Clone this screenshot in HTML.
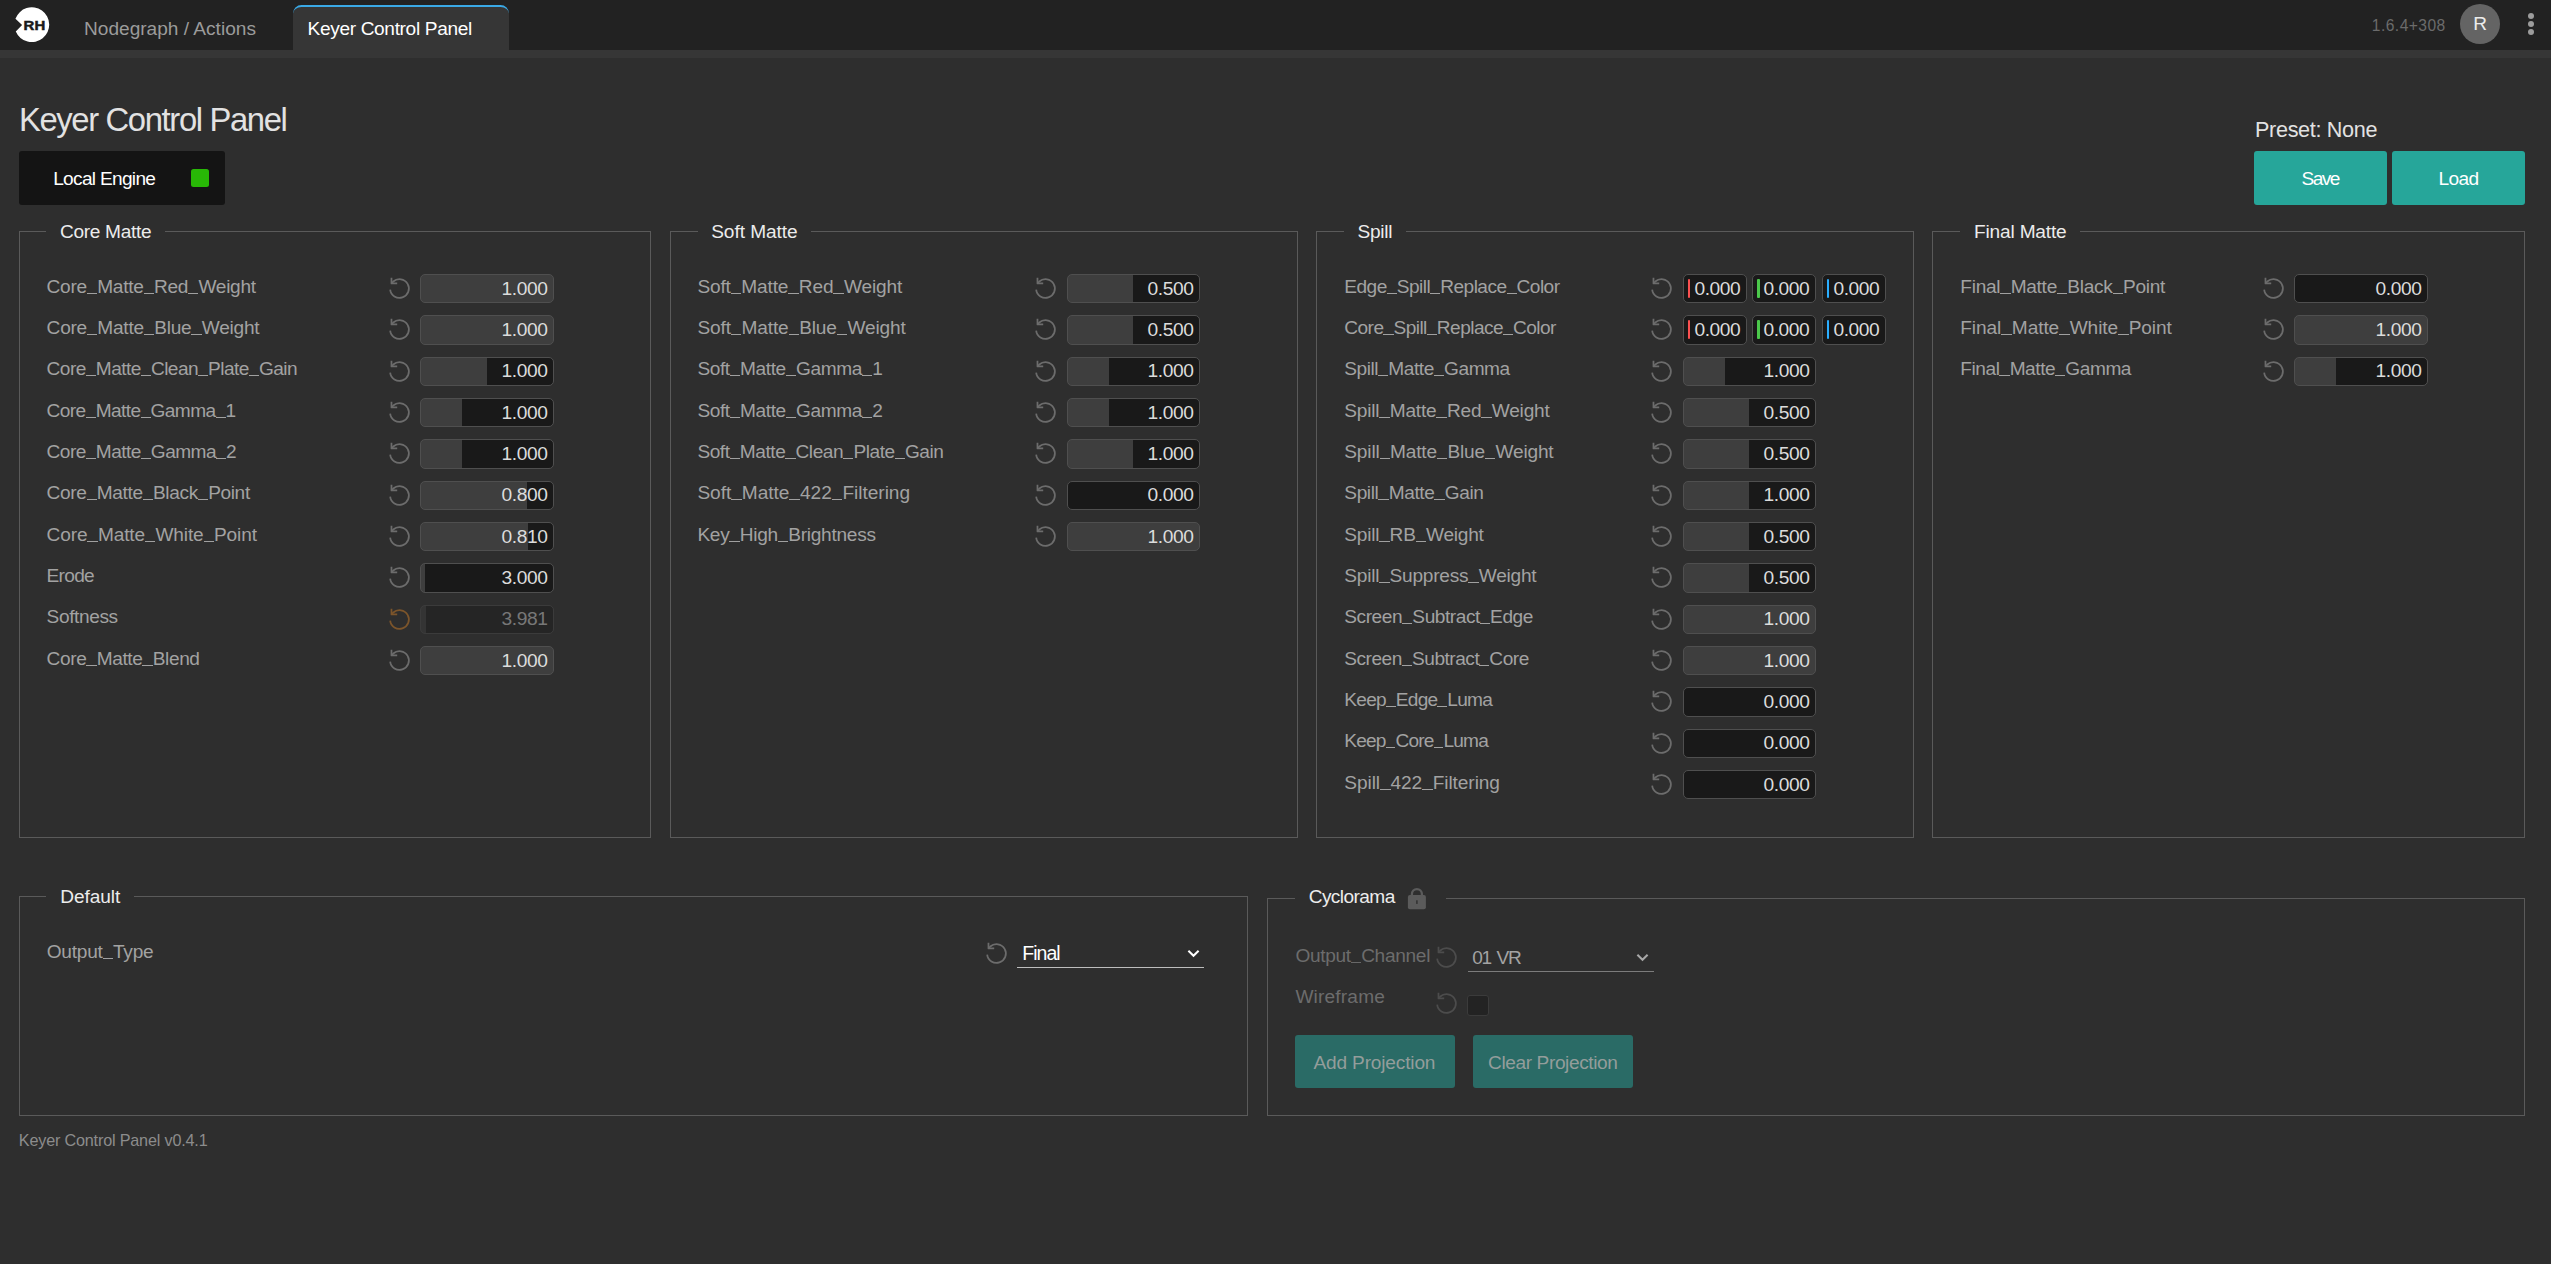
<!DOCTYPE html>
<html><head><meta charset="utf-8"><title>Keyer Control Panel</title>
<style>
html,body{margin:0;padding:0;background:#2e2e2e;}
body{width:2551px;height:1264px;position:relative;overflow:hidden;font-family:"Liberation Sans",sans-serif;}
.t{position:absolute;white-space:nowrap;}
.cav{color:#ececec}.c9{color:#9b9b9b}.cw{color:#fff}.c6{color:#6b6b6b}.ce{color:#e2e2e2}.cl{color:#ececec}.cb9{color:#a2a2a2}.c7{color:#6c6c6c}.ca{color:#a3a3a3}.c8{color:#8c8c8c}.cbt{color:#939d9b}
u{text-decoration:none;color:transparent;background-repeat:no-repeat;background-size:100% 1.4px;background-position:0 16.7px}
u.ua{background-image:linear-gradient(#a0a0a0,#a0a0a0)}
u.ub{background-image:linear-gradient(#686868,#686868)}
#topbar{position:absolute;left:0;top:0;width:2551px;height:50px;background:#222}
#strip{position:absolute;left:0;top:50px;width:2551px;height:8px;background:#363636}
#tab{position:absolute;left:293px;top:5px;width:216px;height:45px;background:#363636;border-top:2px solid #3aa9e6;border-radius:8.5px 8.5px 0 0;box-sizing:border-box}
#avatar{position:absolute;left:2460px;top:4px;width:40px;height:40px;border-radius:50%;background:#646464}
.dot{position:absolute;left:2528px;width:6px;height:6px;border-radius:50%;background:#9c9c9c}
#engine{position:absolute;left:19px;top:151px;width:206px;height:54px;background:#141414;border-radius:3px}
#led{position:absolute;left:191px;top:169px;width:18px;height:18px;background:#28b806;border-radius:2.5px}
.btn{position:absolute;background:#26a69a;border-radius:3px}
.btn2{position:absolute;background:#2a6b66;border-radius:3px}
.fs{position:absolute;border:1px solid #5a5a5a}
.gap{position:absolute;height:3px;background:#2e2e2e}
.rs{position:absolute;fill:none;stroke:#6c6c6c;stroke-width:1.68;stroke-linecap:butt;stroke-linejoin:round}
.rs.org{stroke:#7c552b}
.rs.dim{stroke:#4c4c4c}
.nb{position:absolute;border:1px solid #4f4f4f;border-radius:5px;color:#dcdcdc;font-size:19.2px;line-height:29px}
.nb span{position:absolute;white-space:nowrap}
.nb.dis{opacity:.42}
.nb.cb i{position:absolute;left:4px;top:4px;height:19px;border-radius:1px}
.sel{position:absolute;border-bottom:1px solid #bdbdbd;box-sizing:border-box}
.chev{position:absolute;fill:none;stroke-width:2.2}
#chk{position:absolute;left:1467px;top:995px;width:20px;height:19px;background:#232323;border:1px solid #3b3b3b;border-radius:3px}
</style></head>
<body>
<div id="topbar"></div><div id="strip"></div>
<div id="tab"></div>
<svg style="position:absolute;left:14px;top:6px" width="38" height="38" viewBox="0 0 38 38"><path d="M1.43 12.8A17.4 17.4 0 1 1 1.78 25.5L8.1 18.9Z" fill="#fff"/><text x="9.6" y="23.7" font-family="Liberation Sans, sans-serif" font-weight="700" font-size="13.6" textLength="21.6" lengthAdjust="spacingAndGlyphs" fill="#1a1a1a" stroke="#1a1a1a" stroke-width="0.5">RH</text></svg>
<div class="t c9" style="left:84.0px;top:14.00px;font-size:19.10px;line-height:29px;letter-spacing:-0.001px;">Nodegraph / Actions</div>
<div class="t cw" style="left:307.5px;top:14.00px;font-size:19.10px;line-height:29px;letter-spacing:-0.341px;">Keyer Control Panel</div>
<div class="t c6" style="left:2371.8px;top:13.00px;font-size:15.60px;line-height:25px;letter-spacing:0.458px;">1.6.4+308</div>
<div id="avatar"></div>
<div class="t cav" style="left:2473.2px;top:9.00px;font-size:19.10px;line-height:29px;">R</div>
<div class="dot" style="top:13px"></div><div class="dot" style="top:21px"></div><div class="dot" style="top:29px"></div>
<div class="t ce" style="left:18.9px;top:97.00px;font-size:32.80px;line-height:45px;letter-spacing:-1.363px;">Keyer Control Panel</div>
<div id="engine"></div><div id="led"></div>
<div class="t cw" style="left:53.2px;top:164.00px;font-size:19.10px;line-height:29px;letter-spacing:-0.695px;">Local Engine</div>
<div class="t ce" style="left:2255.0px;top:113.00px;font-size:21.60px;line-height:33px;letter-spacing:-0.324px;">Preset: None</div>
<div class="btn" style="left:2254px;top:151px;width:133px;height:54px"></div>
<div class="btn" style="left:2392px;top:151px;width:133px;height:54px"></div>
<div class="t cw" style="left:2301.5px;top:164.00px;font-size:19.10px;line-height:29px;letter-spacing:-1.512px;">Save</div>
<div class="t cw" style="left:2438.5px;top:164.00px;font-size:19.10px;line-height:29px;letter-spacing:-0.630px;">Load</div>
<div class="fs" style="left:19px;top:231px;width:630px;height:605px"></div>
<div class="gap" style="left:46px;top:230px;width:119px"></div>
<div class="fs" style="left:670px;top:231px;width:626px;height:605px"></div>
<div class="gap" style="left:698px;top:230px;width:113px"></div>
<div class="fs" style="left:1316px;top:231px;width:596px;height:605px"></div>
<div class="gap" style="left:1344px;top:230px;width:62px"></div>
<div class="fs" style="left:1932px;top:231px;width:591px;height:605px"></div>
<div class="gap" style="left:1960px;top:230px;width:120px"></div>
<div class="t cl" style="left:60.0px;top:217.00px;font-size:19.10px;line-height:29px;letter-spacing:-0.319px;">Core Matte</div>
<div class="t cl" style="left:711.2px;top:217.00px;font-size:19.10px;line-height:29px;letter-spacing:-0.061px;">Soft Matte</div>
<div class="t cl" style="left:1357.6px;top:217.00px;font-size:19.10px;line-height:29px;letter-spacing:-0.298px;">Spill</div>
<div class="t cl" style="left:1974.0px;top:217.00px;font-size:19.10px;line-height:29px;letter-spacing:-0.177px;">Final Matte</div>
<div class="t cb9" style="left:46.6px;top:272.00px;font-size:19.10px;line-height:29px;letter-spacing:-0.284px;">Core<u class="ua">_</u>Matte<u class="ua">_</u>Red<u class="ua">_</u>Weight</div>
<svg class="rs " style="left:386.95px;top:276.00px" width="25" height="25" viewBox="0 0 24 24"><path d="M3.04 13A9 9 0 1 0 6 5.3L4.3 7.14"/><path d="M4.3 1.75V7.14H9.8"/></svg>
<div class="nb " style="left:420px;top:274px;width:132px;height:27px;background:#3e3e3e"><span style="right:5.2px;top:-1.00px;letter-spacing:-0.437px;margin-right:0.437px">1.000</span></div>
<div class="t cb9" style="left:46.6px;top:313.00px;font-size:19.10px;line-height:29px;letter-spacing:-0.255px;">Core<u class="ua">_</u>Matte<u class="ua">_</u>Blue<u class="ua">_</u>Weight</div>
<svg class="rs " style="left:386.95px;top:317.33px" width="25" height="25" viewBox="0 0 24 24"><path d="M3.04 13A9 9 0 1 0 6 5.3L4.3 7.14"/><path d="M4.3 1.75V7.14H9.8"/></svg>
<div class="nb " style="left:420px;top:315px;width:132px;height:28px;background:#3e3e3e"><span style="right:5.2px;top:-1.00px;letter-spacing:-0.437px;margin-right:0.437px">1.000</span></div>
<div class="t cb9" style="left:46.6px;top:354.00px;font-size:19.10px;line-height:29px;letter-spacing:-0.556px;">Core<u class="ua">_</u>Matte<u class="ua">_</u>Clean<u class="ua">_</u>Plate<u class="ua">_</u>Gain</div>
<svg class="rs " style="left:386.95px;top:358.67px" width="25" height="25" viewBox="0 0 24 24"><path d="M3.04 13A9 9 0 1 0 6 5.3L4.3 7.14"/><path d="M4.3 1.75V7.14H9.8"/></svg>
<div class="nb " style="left:420px;top:357px;width:132px;height:27px;background:linear-gradient(90deg,#3e3e3e 66px,#191919 66px)"><span style="right:5.2px;top:-2.00px;letter-spacing:-0.437px;margin-right:0.437px">1.000</span></div>
<div class="t cb9" style="left:46.6px;top:396.00px;font-size:19.10px;line-height:29px;letter-spacing:-0.587px;">Core<u class="ua">_</u>Matte<u class="ua">_</u>Gamma<u class="ua">_</u>1</div>
<svg class="rs " style="left:386.95px;top:400.00px" width="25" height="25" viewBox="0 0 24 24"><path d="M3.04 13A9 9 0 1 0 6 5.3L4.3 7.14"/><path d="M4.3 1.75V7.14H9.8"/></svg>
<div class="nb " style="left:420px;top:398px;width:132px;height:27px;background:linear-gradient(90deg,#3e3e3e 41px,#191919 41px)"><span style="right:5.2px;top:-1.00px;letter-spacing:-0.437px;margin-right:0.437px">1.000</span></div>
<div class="t cb9" style="left:46.6px;top:437.00px;font-size:19.10px;line-height:29px;letter-spacing:-0.558px;">Core<u class="ua">_</u>Matte<u class="ua">_</u>Gamma<u class="ua">_</u>2</div>
<svg class="rs " style="left:386.95px;top:441.33px" width="25" height="25" viewBox="0 0 24 24"><path d="M3.04 13A9 9 0 1 0 6 5.3L4.3 7.14"/><path d="M4.3 1.75V7.14H9.8"/></svg>
<div class="nb " style="left:420px;top:439px;width:132px;height:28px;background:linear-gradient(90deg,#3e3e3e 41px,#191919 41px)"><span style="right:5.2px;top:-1.00px;letter-spacing:-0.437px;margin-right:0.437px">1.000</span></div>
<div class="t cb9" style="left:46.6px;top:478.00px;font-size:19.10px;line-height:29px;letter-spacing:-0.366px;">Core<u class="ua">_</u>Matte<u class="ua">_</u>Black<u class="ua">_</u>Point</div>
<svg class="rs " style="left:386.95px;top:482.67px" width="25" height="25" viewBox="0 0 24 24"><path d="M3.04 13A9 9 0 1 0 6 5.3L4.3 7.14"/><path d="M4.3 1.75V7.14H9.8"/></svg>
<div class="nb " style="left:420px;top:481px;width:132px;height:27px;background:linear-gradient(90deg,#3e3e3e 106px,#191919 106px)"><span style="right:5.2px;top:-2.00px;letter-spacing:-0.437px;margin-right:0.437px">0.800</span></div>
<div class="t cb9" style="left:46.6px;top:520.00px;font-size:19.10px;line-height:29px;letter-spacing:-0.143px;">Core<u class="ua">_</u>Matte<u class="ua">_</u>White<u class="ua">_</u>Point</div>
<svg class="rs " style="left:386.95px;top:524.00px" width="25" height="25" viewBox="0 0 24 24"><path d="M3.04 13A9 9 0 1 0 6 5.3L4.3 7.14"/><path d="M4.3 1.75V7.14H9.8"/></svg>
<div class="nb " style="left:420px;top:522px;width:132px;height:27px;background:linear-gradient(90deg,#3e3e3e 107px,#191919 107px)"><span style="right:5.2px;top:-1.00px;letter-spacing:-0.437px;margin-right:0.437px">0.810</span></div>
<div class="t cb9" style="left:46.6px;top:561.00px;font-size:19.10px;line-height:29px;letter-spacing:-0.717px;">Erode</div>
<svg class="rs " style="left:386.95px;top:565.33px" width="25" height="25" viewBox="0 0 24 24"><path d="M3.04 13A9 9 0 1 0 6 5.3L4.3 7.14"/><path d="M4.3 1.75V7.14H9.8"/></svg>
<div class="nb " style="left:420px;top:563px;width:132px;height:28px;background:linear-gradient(90deg,#3e3e3e 4px,#191919 4px)"><span style="right:5.2px;top:-1.00px;letter-spacing:-0.437px;margin-right:0.437px">3.000</span></div>
<div class="t cb9" style="left:46.6px;top:602.00px;font-size:19.10px;line-height:29px;letter-spacing:-0.389px;">Softness</div>
<svg class="rs org" style="left:386.95px;top:606.67px" width="25" height="25" viewBox="0 0 24 24"><path d="M3.04 13A9 9 0 1 0 6 5.3L4.3 7.14"/><path d="M4.3 1.75V7.14H9.8"/></svg>
<div class="nb  dis" style="left:420px;top:605px;width:132px;height:27px;background:linear-gradient(90deg,#3e3e3e 5px,#191919 5px)"><span style="right:5.2px;top:-2.00px;letter-spacing:-0.437px;margin-right:0.437px">3.981</span></div>
<div class="t cb9" style="left:46.6px;top:644.00px;font-size:19.10px;line-height:29px;letter-spacing:-0.391px;">Core<u class="ua">_</u>Matte<u class="ua">_</u>Blend</div>
<svg class="rs " style="left:386.95px;top:648.00px" width="25" height="25" viewBox="0 0 24 24"><path d="M3.04 13A9 9 0 1 0 6 5.3L4.3 7.14"/><path d="M4.3 1.75V7.14H9.8"/></svg>
<div class="nb " style="left:420px;top:646px;width:132px;height:27px;background:#3e3e3e"><span style="right:5.2px;top:-1.00px;letter-spacing:-0.437px;margin-right:0.437px">1.000</span></div>
<div class="t cb9" style="left:697.4px;top:272.00px;font-size:19.10px;line-height:29px;letter-spacing:-0.143px;">Soft<u class="ua">_</u>Matte<u class="ua">_</u>Red<u class="ua">_</u>Weight</div>
<svg class="rs " style="left:1033.05px;top:276.00px" width="25" height="25" viewBox="0 0 24 24"><path d="M3.04 13A9 9 0 1 0 6 5.3L4.3 7.14"/><path d="M4.3 1.75V7.14H9.8"/></svg>
<div class="nb " style="left:1067px;top:274px;width:131px;height:27px;background:linear-gradient(90deg,#3e3e3e 65px,#191919 65px)"><span style="right:5.2px;top:-1.00px;letter-spacing:-0.437px;margin-right:0.437px">0.500</span></div>
<div class="t cb9" style="left:697.4px;top:313.00px;font-size:19.10px;line-height:29px;letter-spacing:-0.116px;">Soft<u class="ua">_</u>Matte<u class="ua">_</u>Blue<u class="ua">_</u>Weight</div>
<svg class="rs " style="left:1033.05px;top:317.33px" width="25" height="25" viewBox="0 0 24 24"><path d="M3.04 13A9 9 0 1 0 6 5.3L4.3 7.14"/><path d="M4.3 1.75V7.14H9.8"/></svg>
<div class="nb " style="left:1067px;top:315px;width:131px;height:28px;background:linear-gradient(90deg,#3e3e3e 65px,#191919 65px)"><span style="right:5.2px;top:-1.00px;letter-spacing:-0.437px;margin-right:0.437px">0.500</span></div>
<div class="t cb9" style="left:697.4px;top:354.00px;font-size:19.10px;line-height:29px;letter-spacing:-0.392px;">Soft<u class="ua">_</u>Matte<u class="ua">_</u>Gamma<u class="ua">_</u>1</div>
<svg class="rs " style="left:1033.05px;top:358.67px" width="25" height="25" viewBox="0 0 24 24"><path d="M3.04 13A9 9 0 1 0 6 5.3L4.3 7.14"/><path d="M4.3 1.75V7.14H9.8"/></svg>
<div class="nb " style="left:1067px;top:357px;width:131px;height:27px;background:linear-gradient(90deg,#3e3e3e 41px,#191919 41px)"><span style="right:5.2px;top:-2.00px;letter-spacing:-0.437px;margin-right:0.437px">1.000</span></div>
<div class="t cb9" style="left:697.4px;top:396.00px;font-size:19.10px;line-height:29px;letter-spacing:-0.392px;">Soft<u class="ua">_</u>Matte<u class="ua">_</u>Gamma<u class="ua">_</u>2</div>
<svg class="rs " style="left:1033.05px;top:400.00px" width="25" height="25" viewBox="0 0 24 24"><path d="M3.04 13A9 9 0 1 0 6 5.3L4.3 7.14"/><path d="M4.3 1.75V7.14H9.8"/></svg>
<div class="nb " style="left:1067px;top:398px;width:131px;height:27px;background:linear-gradient(90deg,#3e3e3e 41px,#191919 41px)"><span style="right:5.2px;top:-1.00px;letter-spacing:-0.437px;margin-right:0.437px">1.000</span></div>
<div class="t cb9" style="left:697.4px;top:437.00px;font-size:19.10px;line-height:29px;letter-spacing:-0.443px;">Soft<u class="ua">_</u>Matte<u class="ua">_</u>Clean<u class="ua">_</u>Plate<u class="ua">_</u>Gain</div>
<svg class="rs " style="left:1033.05px;top:441.33px" width="25" height="25" viewBox="0 0 24 24"><path d="M3.04 13A9 9 0 1 0 6 5.3L4.3 7.14"/><path d="M4.3 1.75V7.14H9.8"/></svg>
<div class="nb " style="left:1067px;top:439px;width:131px;height:28px;background:linear-gradient(90deg,#3e3e3e 65px,#191919 65px)"><span style="right:5.2px;top:-1.00px;letter-spacing:-0.437px;margin-right:0.437px">1.000</span></div>
<div class="t cb9" style="left:697.4px;top:478.00px;font-size:19.10px;line-height:29px;letter-spacing:-0.031px;">Soft<u class="ua">_</u>Matte<u class="ua">_</u>422<u class="ua">_</u>Filtering</div>
<svg class="rs " style="left:1033.05px;top:482.67px" width="25" height="25" viewBox="0 0 24 24"><path d="M3.04 13A9 9 0 1 0 6 5.3L4.3 7.14"/><path d="M4.3 1.75V7.14H9.8"/></svg>
<div class="nb " style="left:1067px;top:481px;width:131px;height:27px;background:#191919"><span style="right:5.2px;top:-2.00px;letter-spacing:-0.437px;margin-right:0.437px">0.000</span></div>
<div class="t cb9" style="left:697.4px;top:520.00px;font-size:19.10px;line-height:29px;letter-spacing:-0.282px;">Key<u class="ua">_</u>High<u class="ua">_</u>Brightness</div>
<svg class="rs " style="left:1033.05px;top:524.00px" width="25" height="25" viewBox="0 0 24 24"><path d="M3.04 13A9 9 0 1 0 6 5.3L4.3 7.14"/><path d="M4.3 1.75V7.14H9.8"/></svg>
<div class="nb " style="left:1067px;top:522px;width:131px;height:27px;background:#3e3e3e"><span style="right:5.2px;top:-1.00px;letter-spacing:-0.437px;margin-right:0.437px">1.000</span></div>
<div class="t cb9" style="left:1344.3px;top:272.00px;font-size:19.10px;line-height:29px;letter-spacing:-0.543px;">Edge<u class="ua">_</u>Spill<u class="ua">_</u>Replace<u class="ua">_</u>Color</div>
<svg class="rs " style="left:1649.10px;top:276.00px" width="25" height="25" viewBox="0 0 24 24"><path d="M3.04 13A9 9 0 1 0 6 5.3L4.3 7.14"/><path d="M4.3 1.75V7.14H9.8"/></svg>
<div class="nb cb" style="left:1683px;top:274px;width:62px;height:27px;background:#191919"><i style="background:#fb5050;width:2.4px"></i><span style="right:5.3px;top:-1.00px;letter-spacing:-0.437px;margin-right:0.437px">0.000</span></div>
<div class="nb cb" style="left:1752px;top:274px;width:62px;height:27px;background:#191919"><i style="background:#4bc84b;width:3.4px"></i><span style="right:5.3px;top:-1.00px;letter-spacing:-0.437px;margin-right:0.437px">0.000</span></div>
<div class="nb cb" style="left:1822px;top:274px;width:62px;height:27px;background:#191919"><i style="background:#2aaeff;width:2.3px"></i><span style="right:5.3px;top:-1.00px;letter-spacing:-0.437px;margin-right:0.437px">0.000</span></div>
<div class="t cb9" style="left:1344.3px;top:313.00px;font-size:19.10px;line-height:29px;letter-spacing:-0.560px;">Core<u class="ua">_</u>Spill<u class="ua">_</u>Replace<u class="ua">_</u>Color</div>
<svg class="rs " style="left:1649.10px;top:317.33px" width="25" height="25" viewBox="0 0 24 24"><path d="M3.04 13A9 9 0 1 0 6 5.3L4.3 7.14"/><path d="M4.3 1.75V7.14H9.8"/></svg>
<div class="nb cb" style="left:1683px;top:315px;width:62px;height:28px;background:#191919"><i style="background:#fb5050;width:2.4px"></i><span style="right:5.3px;top:-1.00px;letter-spacing:-0.437px;margin-right:0.437px">0.000</span></div>
<div class="nb cb" style="left:1752px;top:315px;width:62px;height:28px;background:#191919"><i style="background:#4bc84b;width:3.4px"></i><span style="right:5.3px;top:-1.00px;letter-spacing:-0.437px;margin-right:0.437px">0.000</span></div>
<div class="nb cb" style="left:1822px;top:315px;width:62px;height:28px;background:#191919"><i style="background:#2aaeff;width:2.3px"></i><span style="right:5.3px;top:-1.00px;letter-spacing:-0.437px;margin-right:0.437px">0.000</span></div>
<div class="t cb9" style="left:1344.3px;top:354.00px;font-size:19.10px;line-height:29px;letter-spacing:-0.446px;">Spill<u class="ua">_</u>Matte<u class="ua">_</u>Gamma</div>
<svg class="rs " style="left:1649.10px;top:358.67px" width="25" height="25" viewBox="0 0 24 24"><path d="M3.04 13A9 9 0 1 0 6 5.3L4.3 7.14"/><path d="M4.3 1.75V7.14H9.8"/></svg>
<div class="nb " style="left:1683px;top:357px;width:131px;height:27px;background:linear-gradient(90deg,#3e3e3e 41px,#191919 41px)"><span style="right:5.2px;top:-2.00px;letter-spacing:-0.437px;margin-right:0.437px">1.000</span></div>
<div class="t cb9" style="left:1344.3px;top:396.00px;font-size:19.10px;line-height:29px;letter-spacing:-0.208px;">Spill<u class="ua">_</u>Matte<u class="ua">_</u>Red<u class="ua">_</u>Weight</div>
<svg class="rs " style="left:1649.10px;top:400.00px" width="25" height="25" viewBox="0 0 24 24"><path d="M3.04 13A9 9 0 1 0 6 5.3L4.3 7.14"/><path d="M4.3 1.75V7.14H9.8"/></svg>
<div class="nb " style="left:1683px;top:398px;width:131px;height:27px;background:linear-gradient(90deg,#3e3e3e 65px,#191919 65px)"><span style="right:5.2px;top:-1.00px;letter-spacing:-0.437px;margin-right:0.437px">0.500</span></div>
<div class="t cb9" style="left:1344.3px;top:437.00px;font-size:19.10px;line-height:29px;letter-spacing:-0.166px;">Spill<u class="ua">_</u>Matte<u class="ua">_</u>Blue<u class="ua">_</u>Weight</div>
<svg class="rs " style="left:1649.10px;top:441.33px" width="25" height="25" viewBox="0 0 24 24"><path d="M3.04 13A9 9 0 1 0 6 5.3L4.3 7.14"/><path d="M4.3 1.75V7.14H9.8"/></svg>
<div class="nb " style="left:1683px;top:439px;width:131px;height:28px;background:linear-gradient(90deg,#3e3e3e 65px,#191919 65px)"><span style="right:5.2px;top:-1.00px;letter-spacing:-0.437px;margin-right:0.437px">0.500</span></div>
<div class="t cb9" style="left:1344.3px;top:478.00px;font-size:19.10px;line-height:29px;letter-spacing:-0.390px;">Spill<u class="ua">_</u>Matte<u class="ua">_</u>Gain</div>
<svg class="rs " style="left:1649.10px;top:482.67px" width="25" height="25" viewBox="0 0 24 24"><path d="M3.04 13A9 9 0 1 0 6 5.3L4.3 7.14"/><path d="M4.3 1.75V7.14H9.8"/></svg>
<div class="nb " style="left:1683px;top:481px;width:131px;height:27px;background:linear-gradient(90deg,#3e3e3e 65px,#191919 65px)"><span style="right:5.2px;top:-2.00px;letter-spacing:-0.437px;margin-right:0.437px">1.000</span></div>
<div class="t cb9" style="left:1344.3px;top:520.00px;font-size:19.10px;line-height:29px;letter-spacing:-0.241px;">Spill<u class="ua">_</u>RB<u class="ua">_</u>Weight</div>
<svg class="rs " style="left:1649.10px;top:524.00px" width="25" height="25" viewBox="0 0 24 24"><path d="M3.04 13A9 9 0 1 0 6 5.3L4.3 7.14"/><path d="M4.3 1.75V7.14H9.8"/></svg>
<div class="nb " style="left:1683px;top:522px;width:131px;height:27px;background:linear-gradient(90deg,#3e3e3e 65px,#191919 65px)"><span style="right:5.2px;top:-1.00px;letter-spacing:-0.437px;margin-right:0.437px">0.500</span></div>
<div class="t cb9" style="left:1344.3px;top:561.00px;font-size:19.10px;line-height:29px;letter-spacing:-0.236px;">Spill<u class="ua">_</u>Suppress<u class="ua">_</u>Weight</div>
<svg class="rs " style="left:1649.10px;top:565.33px" width="25" height="25" viewBox="0 0 24 24"><path d="M3.04 13A9 9 0 1 0 6 5.3L4.3 7.14"/><path d="M4.3 1.75V7.14H9.8"/></svg>
<div class="nb " style="left:1683px;top:563px;width:131px;height:28px;background:linear-gradient(90deg,#3e3e3e 65px,#191919 65px)"><span style="right:5.2px;top:-1.00px;letter-spacing:-0.437px;margin-right:0.437px">0.500</span></div>
<div class="t cb9" style="left:1344.3px;top:602.00px;font-size:19.10px;line-height:29px;letter-spacing:-0.442px;">Screen<u class="ua">_</u>Subtract<u class="ua">_</u>Edge</div>
<svg class="rs " style="left:1649.10px;top:606.67px" width="25" height="25" viewBox="0 0 24 24"><path d="M3.04 13A9 9 0 1 0 6 5.3L4.3 7.14"/><path d="M4.3 1.75V7.14H9.8"/></svg>
<div class="nb " style="left:1683px;top:605px;width:131px;height:27px;background:#3e3e3e"><span style="right:5.2px;top:-2.00px;letter-spacing:-0.437px;margin-right:0.437px">1.000</span></div>
<div class="t cb9" style="left:1344.3px;top:644.00px;font-size:19.10px;line-height:29px;letter-spacing:-0.489px;">Screen<u class="ua">_</u>Subtract<u class="ua">_</u>Core</div>
<svg class="rs " style="left:1649.10px;top:648.00px" width="25" height="25" viewBox="0 0 24 24"><path d="M3.04 13A9 9 0 1 0 6 5.3L4.3 7.14"/><path d="M4.3 1.75V7.14H9.8"/></svg>
<div class="nb " style="left:1683px;top:646px;width:131px;height:27px;background:#3e3e3e"><span style="right:5.2px;top:-1.00px;letter-spacing:-0.437px;margin-right:0.437px">1.000</span></div>
<div class="t cb9" style="left:1344.3px;top:685.00px;font-size:19.10px;line-height:29px;letter-spacing:-0.741px;">Keep<u class="ua">_</u>Edge<u class="ua">_</u>Luma</div>
<svg class="rs " style="left:1649.10px;top:689.33px" width="25" height="25" viewBox="0 0 24 24"><path d="M3.04 13A9 9 0 1 0 6 5.3L4.3 7.14"/><path d="M4.3 1.75V7.14H9.8"/></svg>
<div class="nb " style="left:1683px;top:687px;width:131px;height:28px;background:#191919"><span style="right:5.2px;top:-1.00px;letter-spacing:-0.437px;margin-right:0.437px">0.000</span></div>
<div class="t cb9" style="left:1344.3px;top:726.00px;font-size:19.10px;line-height:29px;letter-spacing:-0.810px;">Keep<u class="ua">_</u>Core<u class="ua">_</u>Luma</div>
<svg class="rs " style="left:1649.10px;top:730.67px" width="25" height="25" viewBox="0 0 24 24"><path d="M3.04 13A9 9 0 1 0 6 5.3L4.3 7.14"/><path d="M4.3 1.75V7.14H9.8"/></svg>
<div class="nb " style="left:1683px;top:729px;width:131px;height:27px;background:#191919"><span style="right:5.2px;top:-2.00px;letter-spacing:-0.437px;margin-right:0.437px">0.000</span></div>
<div class="t cb9" style="left:1344.3px;top:768.00px;font-size:19.10px;line-height:29px;letter-spacing:-0.080px;">Spill<u class="ua">_</u>422<u class="ua">_</u>Filtering</div>
<svg class="rs " style="left:1649.10px;top:772.00px" width="25" height="25" viewBox="0 0 24 24"><path d="M3.04 13A9 9 0 1 0 6 5.3L4.3 7.14"/><path d="M4.3 1.75V7.14H9.8"/></svg>
<div class="nb " style="left:1683px;top:770px;width:131px;height:27px;background:#191919"><span style="right:5.2px;top:-1.00px;letter-spacing:-0.437px;margin-right:0.437px">0.000</span></div>
<div class="t cb9" style="left:1960.3px;top:272.00px;font-size:19.10px;line-height:29px;letter-spacing:-0.281px;">Final<u class="ua">_</u>Matte<u class="ua">_</u>Black<u class="ua">_</u>Point</div>
<svg class="rs " style="left:2261.00px;top:276.00px" width="25" height="25" viewBox="0 0 24 24"><path d="M3.04 13A9 9 0 1 0 6 5.3L4.3 7.14"/><path d="M4.3 1.75V7.14H9.8"/></svg>
<div class="nb " style="left:2294px;top:274px;width:132px;height:27px;background:#191919"><span style="right:5.2px;top:-1.00px;letter-spacing:-0.437px;margin-right:0.437px">0.000</span></div>
<div class="t cb9" style="left:1960.3px;top:313.00px;font-size:19.10px;line-height:29px;letter-spacing:-0.086px;">Final<u class="ua">_</u>Matte<u class="ua">_</u>White<u class="ua">_</u>Point</div>
<svg class="rs " style="left:2261.00px;top:317.33px" width="25" height="25" viewBox="0 0 24 24"><path d="M3.04 13A9 9 0 1 0 6 5.3L4.3 7.14"/><path d="M4.3 1.75V7.14H9.8"/></svg>
<div class="nb " style="left:2294px;top:315px;width:132px;height:28px;background:#3e3e3e"><span style="right:5.2px;top:-1.00px;letter-spacing:-0.437px;margin-right:0.437px">1.000</span></div>
<div class="t cb9" style="left:1960.3px;top:354.00px;font-size:19.10px;line-height:29px;letter-spacing:-0.446px;">Final<u class="ua">_</u>Matte<u class="ua">_</u>Gamma</div>
<svg class="rs " style="left:2261.00px;top:358.67px" width="25" height="25" viewBox="0 0 24 24"><path d="M3.04 13A9 9 0 1 0 6 5.3L4.3 7.14"/><path d="M4.3 1.75V7.14H9.8"/></svg>
<div class="nb " style="left:2294px;top:357px;width:132px;height:27px;background:linear-gradient(90deg,#3e3e3e 41px,#191919 41px)"><span style="right:5.2px;top:-2.00px;letter-spacing:-0.437px;margin-right:0.437px">1.000</span></div>
<div class="fs" style="left:19px;top:896px;width:1227px;height:218px"></div>
<div class="gap" style="left:46px;top:895px;width:88px"></div>
<div class="t cl" style="left:60.2px;top:882.00px;font-size:19.10px;line-height:29px;letter-spacing:-0.053px;">Default</div>
<div class="t cb9" style="left:46.7px;top:937.00px;font-size:19.10px;line-height:29px;letter-spacing:-0.237px;">Output<u class="ua">_</u>Type</div>
<svg class="rs " style="left:984.30px;top:941.40px" width="25" height="25" viewBox="0 0 24 24"><path d="M3.04 13A9 9 0 1 0 6 5.3L4.3 7.14"/><path d="M4.3 1.75V7.14H9.8"/></svg>
<div class="sel" style="left:1017px;top:938px;width:187px;height:30px"></div>
<div class="t cw" style="left:1022.3px;top:938.00px;font-size:19.50px;line-height:30px;letter-spacing:-0.992px;">Final</div>
<svg class="chev" style="left:1186.6px;top:949.2px" width="13" height="9.3" viewBox="0 0 14 10"><path d="M1.5 1.8L7 7.3L12.5 1.8" stroke="#fff"/></svg>
<div class="fs" style="left:1267px;top:898px;width:1256px;height:216px"></div>
<div class="gap" style="left:1295px;top:897px;width:151px"></div>
<div class="t cl" style="left:1308.7px;top:882.00px;font-size:19.10px;line-height:29px;letter-spacing:-0.584px;">Cyclorama</div>
<svg style="position:absolute;left:1405px;top:886px" width="24" height="26" viewBox="0 0 24 26"><path d="M6.9 10V8.1a5 5 0 0 1 10 0V10" fill="none" stroke="#5b5b5b" stroke-width="2.3"/><rect x="2.9" y="9" width="18" height="14.2" rx="2" fill="#5b5b5b"/><rect x="11.2" y="14.3" width="1.4" height="3.6" fill="#2e2e2e"/></svg>
<div class="t c7" style="left:1295.4px;top:941.00px;font-size:19.10px;line-height:29px;letter-spacing:-0.316px;">Output<u class="ub">_</u>Channel</div>
<svg class="rs dim" style="left:1434.20px;top:945.10px" width="25" height="25" viewBox="0 0 24 24"><path d="M3.04 13A9 9 0 1 0 6 5.3L4.3 7.14"/><path d="M4.3 1.75V7.14H9.8"/></svg>
<div class="sel" style="left:1468px;top:942px;width:186px;height:30px;border-color:#7c7c7c"></div>
<div class="t ca" style="left:1472.2px;top:943.00px;font-size:19.10px;line-height:29px;letter-spacing:-1.396px;word-spacing:2px;">01 VR</div>
<svg class="chev" style="left:1636.4px;top:953.2px" width="13" height="9.3" viewBox="0 0 14 10"><path d="M1.5 1.8L7 7.3L12.5 1.8" stroke="#a8a8a8"/></svg>
<div class="t c7" style="left:1295.4px;top:982.00px;font-size:19.10px;line-height:29px;letter-spacing:0.178px;">Wireframe</div>
<svg class="rs dim" style="left:1434.20px;top:991.00px" width="25" height="25" viewBox="0 0 24 24"><path d="M3.04 13A9 9 0 1 0 6 5.3L4.3 7.14"/><path d="M4.3 1.75V7.14H9.8"/></svg>
<div id="chk"></div>
<div class="btn2" style="left:1295px;top:1035px;width:160px;height:53px"></div>
<div class="btn2" style="left:1473px;top:1035px;width:160px;height:53px"></div>
<div class="t cbt" style="left:1313.5px;top:1048.00px;font-size:19.10px;line-height:29px;letter-spacing:-0.171px;">Add Projection</div>
<div class="t cbt" style="left:1488.0px;top:1048.00px;font-size:19.10px;line-height:29px;letter-spacing:-0.392px;">Clear Projection</div>
<div class="t c8" style="left:18.8px;top:1127.00px;font-size:16.20px;line-height:26px;letter-spacing:-0.184px;">Keyer Control Panel v0.4.1</div>
</body></html>
